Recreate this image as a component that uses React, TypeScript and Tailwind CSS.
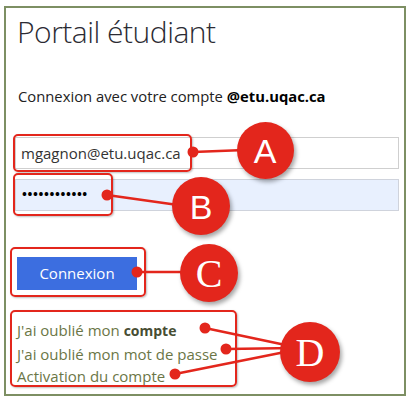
import React from "react";

const RED = "#e3261c";

function Bubble({ letter, cx, cy, d, serif }: { letter: string; cx: number; cy: number; d: number; serif?: boolean }) {
  return (
    <div
      className="absolute rounded-full flex items-center justify-center text-white shadow-[2px_3px_4px_rgba(0,0,0,0.35)]"
      style={{
        left: cx - d / 2,
        top: cy - d / 2,
        width: d,
        height: d,
        background: RED,
        fontFamily: serif ? '"Liberation Serif", serif' : '"Liberation Sans", sans-serif',
        fontSize: serif ? 40 : 34,
        lineHeight: 1,
      }}
    >
      <span className={serif ? "mt-[2px]" : "mt-[1px]"}>{letter}</span>
    </div>
  );
}

function Box({ l, t, w, h }: { l: number; t: number; w: number; h: number }) {
  return (
    <div
      className="absolute rounded-[5px] border-2 border-[#e3261c] shadow-[1px_1px_2px_rgba(0,0,0,0.25)]"
      style={{ left: l, top: t, width: w, height: h }}
    />
  );
}

export default function App() {
  const dots: [number, number][] = [
    [193, 152],
    [107, 195],
    [137, 272],
    [205, 328],
    [226, 349],
    [175, 374],
  ];
  return (
    <div className="relative w-[411px] h-[402px] bg-white overflow-hidden" style={{ fontFamily: '"Open Sans", "Noto Sans", sans-serif' }}>
      <div className="mt-[6px] ml-[4px] w-[402px] h-[390px] border-2 border-[#7d8f63] flex flex-col">
        <div className="pl-[11px] pt-[5px] text-[30px] leading-[38px] font-light text-[#2b2b33] tracking-[-0.5px]">
          Portail étudiant
        </div>
        <div className="pl-[12px] mt-[35px] text-[14.8px] leading-[20px] text-[#222]">
          Connexion avec votre compte <span className="font-bold text-black">@etu.uqac.ca</span>
        </div>
        <div className="ml-[9px] mt-[31px] w-[384px] h-[32px] border border-[#cfcfcf] bg-white pl-[5px] flex items-center text-[15px] text-[#333]">
          mgagnon@etu.uqac.ca
        </div>
        <div className="ml-[9px] mt-[10px] w-[384px] h-[32px] border border-[#cfd3dc] bg-[#e8f0fe] pl-[6px] flex items-center text-[13px] font-bold text-black tracking-[0.6px]">
          ••••••••••••
        </div>
        <div className="ml-[11px] mt-[46px] w-[120px] h-[33px] bg-[#3c6ee0] flex items-center justify-center text-white text-[15px]">
          Connexion
        </div>
        <div className="ml-[11px] mt-[29px] flex flex-col text-[15px] leading-[22.5px] text-[#6b7646]">
          <div>
            J'ai oublié mon <span className="font-bold text-[#474d33] text-[14px]">compte</span>
          </div>
          <div>J'ai oublié mon mot de passe</div>
          <div>Activation du compte</div>
        </div>
      </div>

      <Box l={13} t={134} w={179} h={38} />
      <Box l={13} t={173} w={100} h={43} />
      <Box l={10} t={247} w={136} h={50} />
      <Box l={10} t={310} w={227} h={77} />

      <svg className="absolute left-0 top-0 pointer-events-none" width={411} height={402}>
        <g stroke={RED} strokeWidth={2.5} strokeLinecap="round">
          <line x1={193} y1={152} x2={245} y2={150} />
          <line x1={107} y1={195} x2={185} y2={206} />
          <line x1={137} y1={272} x2={190} y2={272} />
          <line x1={205} y1={328} x2={295} y2={347} />
          <line x1={226} y1={349} x2={295} y2={348} />
          <line x1={175} y1={374} x2={295} y2={350} />
        </g>
        {dots.map(([x, y], i) => (
          <circle key={i} cx={x} cy={y} r={5.5} fill={RED} />
        ))}
      </svg>

      <Bubble letter="A" cx={265} cy={150} d={57} />
      <Bubble letter="B" cx={201} cy={206} d={58} />
      <Bubble letter="C" cx={209} cy={273} d={58} serif />
      <Bubble letter="D" cx={310} cy={352} d={60} serif />
    </div>
  );
}
